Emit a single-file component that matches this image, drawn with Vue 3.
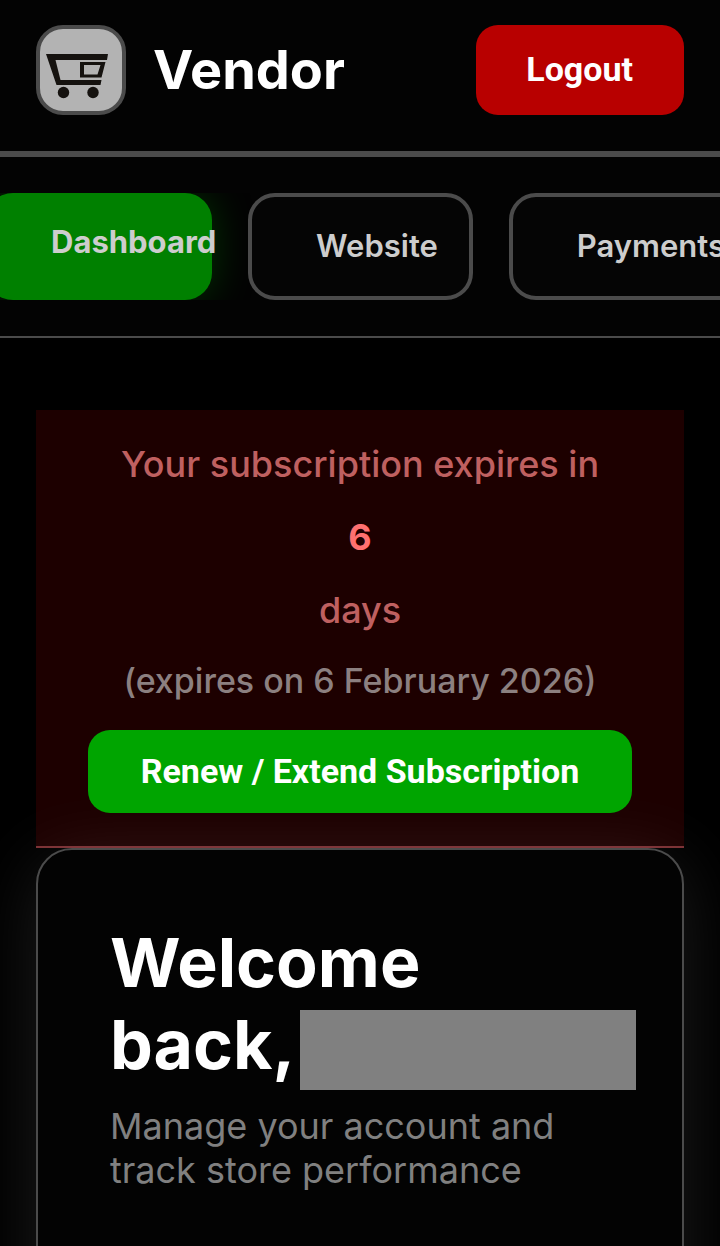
<script setup>
import { onMounted, ref } from 'vue'

const tabsRef = ref(null)
const activeTab = ref('Dashboard')
const tabs = ['Dashboard', 'Website', 'Payments']

const daysLeft = ref(6)
const expiryDate = ref('6 February 2026')

onMounted(() => {
  if (tabsRef.value)
    tabsRef.value.scrollLeft = 50
})
</script>

<template>
  <div class="page">
    <header class="topbar">
      <div class="brand">
        <svg class="logo" viewBox="0 0 82 82" aria-hidden="true">
          <path d="M6 25H68L67 31H15.500L20.500 51H61.500L60.500 56H16.500Z" fill="#15120f" />
          <path d="M40 33H65.500L61.500 48.500H40ZM44 36V45.500H57.500L60.500 36Z" fill="#15120f" fill-rule="evenodd" />
          <circle cx="23.500" cy="63.500" r="5.700" fill="#15120f" />
          <circle cx="53" cy="63.500" r="5.700" fill="#15120f" />
        </svg>
        <span class="brand-name">Vendor</span>
      </div>
      <button class="btn logout-btn" type="button">Logout</button>
    </header>

    <nav class="nav">
      <div ref="tabsRef" class="tabs">
        <a
          v-for="tab in tabs"
          :key="tab"
          class="tab"
          :class="{ active: tab === activeTab }"
          href="#"
          @click.prevent="activeTab = tab"
        >{{ tab }}</a>
      </div>
    </nav>

    <main class="content">
      <section class="banner">
        <span>Your subscription expires in</span>
        <strong class="days">{{ daysLeft }}</strong>
        <span>days</span>
        <span class="expiry">(expires on {{ expiryDate }})</span>
        <button class="btn renew-btn" type="button">Renew / Extend Subscription</button>
      </section>

      <section class="card">
        <h1 class="title">
          Welcome <span class="title-end">back,<span class="name-mask" /></span>
        </h1>
        <p class="subtitle">Manage your account and track store performance</p>
      </section>
    </main>
  </div>
</template>

<style>
body {
  margin: 0;
  background: #000;
}
</style>

<style scoped>
.page {
  min-height: 100vh;
  overflow: hidden;
  background: #000;
  color: #fff;
  font-family: Inter, 'Liberation Sans', sans-serif;
}

.topbar {
  display: flex;
  justify-content: space-between;
  align-items: center;
  padding: 25px 36px 36px;
  border-bottom: 6px solid #4b4b4b;
  background: #030303;
}

.brand {
  display: flex;
  align-items: center;
  gap: 27px;
}

.logo {
  box-sizing: border-box;
  width: 90px;
  height: 90px;
  border: 4px solid #4b4b4b;
  border-radius: 27px;
  background: #b3b3b3;
}

.brand-name {
  font-size: 54px;
  font-weight: 700;
  line-height: 66px;
}

.btn {
  border: none;
  border-radius: 22px;
  color: #fff;
  font-family: Roboto, 'Liberation Sans', sans-serif;
  font-size: 34px;
  font-weight: 700;
  line-height: 40px;
  cursor: pointer;
}

.logout-btn {
  padding: 24px 51px 26px 50px;
  background: #b80000;
}

.nav {
  padding: 36px 0;
  border-bottom: 2px solid #4b4b4b;
  background: #030303;
}

.tabs {
  display: flex;
  gap: 36px;
  padding: 0 36px;
  overflow-x: auto;
  scrollbar-width: none;
}

.tab {
  flex: none;
  padding: 28px 31px 30px 64px;
  border: 4px solid #4b4b4b;
  border-radius: 27px;
  background: #050505;
  color: #cdcdcd;
  font-size: 31px;
  font-weight: 600;
  line-height: 41px;
  text-decoration: none;
  white-space: nowrap;
}

.tab.active {
  box-sizing: border-box;
  width: 226px;
  padding-left: 65px;
  border: none;
  background: #008000;
  box-shadow: 0 0 40px rgba(0, 128, 0, 0.4);
  font-weight: 700;
}

.content {
  padding: 72px 36px;
}

.banner {
  display: flex;
  flex-direction: column;
  align-items: center;
  gap: 28px;
  padding: 32px 36px 33px;
  border-bottom: 2px solid #7b3034;
  background: #1d0000;
  color: #bf6060;
  font-size: 36px;
  font-weight: 500;
  line-height: 45px;
  text-align: center;
}

.days {
  color: #ff7070;
  font-weight: 700;
}

.expiry {
  padding-bottom: 2px;
  color: #8c8080;
  font-size: 34px;
  line-height: 39px;
}

.renew-btn {
  padding: 21px 53px 22px;
  background: #00a500;
}

.card {
  padding: 71px 72px 144px;
  border: 2px solid #4b4b4b;
  border-radius: 36px;
  background: #030303;
  box-shadow: 0 12px 72px rgba(255, 255, 255, 0.11);
}

.title {
  margin: 0;
  font-size: 68px;
  font-weight: 700;
  line-height: 82px;
}

.title-end {
  white-space: nowrap;
}

.name-mask {
  display: inline-block;
  width: 336px;
  height: 80px;
  margin: 0 0 -5px 5px;
  background: #808080;
  vertical-align: bottom;
}

.subtitle {
  margin: 19px 0 0;
  color: #808080;
  font-size: 36px;
  line-height: 44px;
}
</style>
